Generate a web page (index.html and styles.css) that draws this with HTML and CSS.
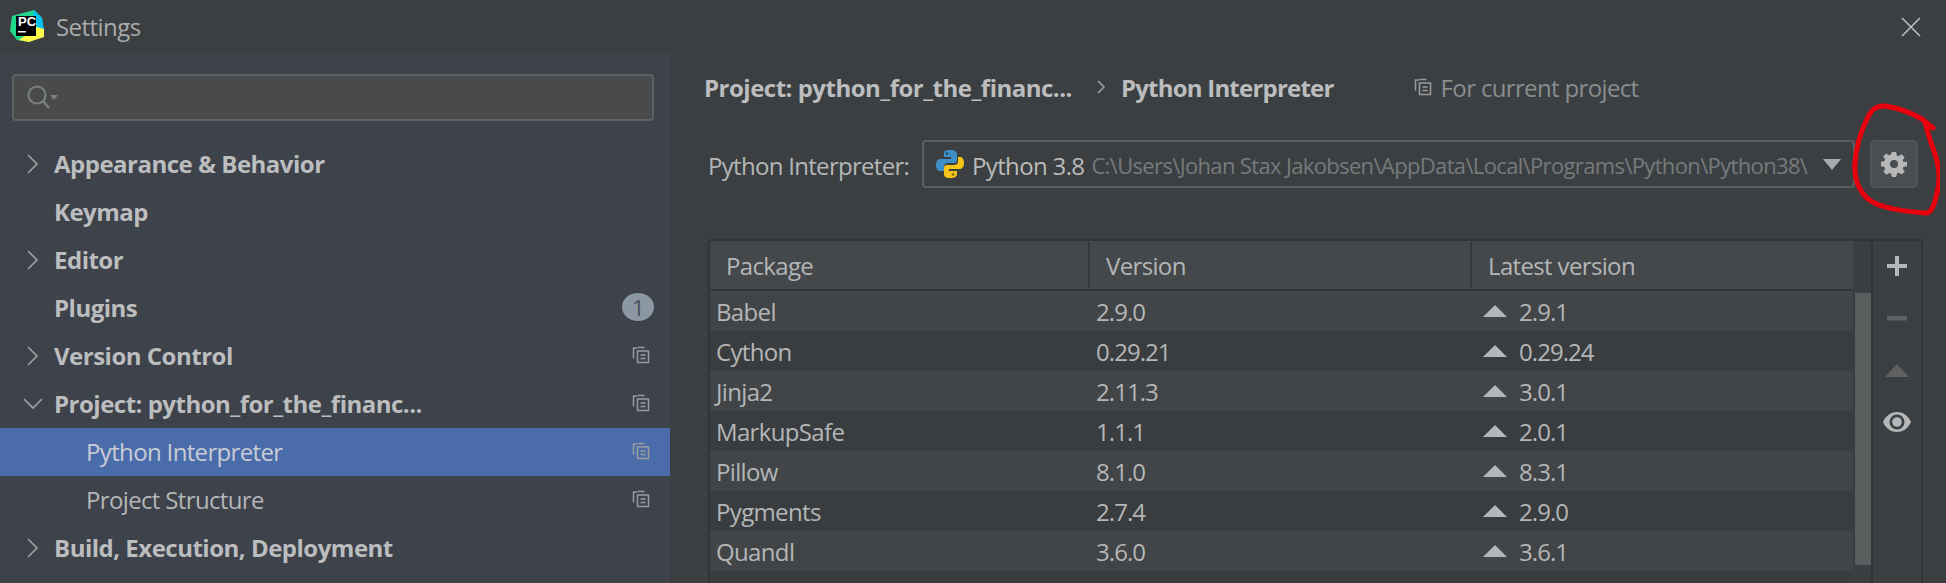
FILE: index.html
```html
<!DOCTYPE html>
<html lang="en">
<head>
  <meta charset="UTF-8" />
  <title>Settings</title>
  <link rel="stylesheet" href="styles.css">
</head>
<body>
  <div class="window">
    <header class="titlebar">
      <svg class="logo" width="36" height="34" viewBox="0 0 36 34">
        <polygon points="25,1 33,9 35,26 20,33 8,31 1,22 3,7 14,4" fill="#21d789"/>
        <polygon points="25,1 33,9 35,20 28,20 24,6" fill="#07c3f2"/>
        <polygon points="35,20 35,28 20,33 10,31 28,18" fill="#fcf84a"/>
        <rect x="7" y="7" width="20" height="20" fill="#000"/>
        <rect x="9" y="22" width="8" height="1.5" fill="#fff"/>
      </svg>
      <span class="logo-text">PC</span>
      <span class="title">Settings</span>
      <svg class="close" width="20" height="20" viewBox="0 0 20 20"><path d="M1 1 L19 19 M19 1 L1 19" stroke="#bbbdbe" stroke-width="1.6" fill="none"/></svg>
    </header>

    <div class="content">
      <aside class="sidebar">
        <div class="search">
          <svg width="36" height="28" viewBox="0 0 36 28">
            <circle cx="11" cy="11" r="8.5" fill="none" stroke="#7d8081" stroke-width="2"/>
            <path d="M17 17 L23 24" stroke="#7d8081" stroke-width="2.4"/>
            <polygon points="24,11 32,11 28,16" fill="#7d8081"/>
          </svg>
        </div>
        <ul class="tree">
          <li class="node bold"><svg class="arrow" viewBox="0 0 14 20"><path d="M2 1 L11 10 L2 19" /></svg>Appearance &amp; Behavior</li>
          <li class="node bold">Keymap</li>
          <li class="node bold"><svg class="arrow" viewBox="0 0 14 20"><path d="M2 1 L11 10 L2 19" /></svg>Editor</li>
          <li class="node bold">Plugins<span class="badge">1</span></li>
          <li class="node bold"><svg class="arrow" viewBox="0 0 14 20"><path d="M2 1 L11 10 L2 19" /></svg>Version Control<svg class="scope" viewBox="0 0 18 18"><use href="#scope-icon"/></svg></li>
          <li class="node bold"><svg class="arrow arrow-down" viewBox="0 0 20 14"><path d="M1 2 L10 11 L19 2" /></svg>Project: python_for_the_financ...<svg class="scope" viewBox="0 0 18 18"><use href="#scope-icon"/></svg></li>
          <li class="node child selected">Python Interpreter<svg class="scope" viewBox="0 0 18 18"><use href="#scope-icon"/></svg></li>
          <li class="node child">Project Structure<svg class="scope" viewBox="0 0 18 18"><use href="#scope-icon"/></svg></li>
          <li class="node bold"><svg class="arrow" viewBox="0 0 14 20"><path d="M2 1 L11 10 L2 19" /></svg>Build, Execution, Deployment</li>
        </ul>
      </aside>

      <main class="panel">
        <div class="crumbs">
          <span class="crumb crumb-project">Project: python_for_the_financ...</span>
          <svg class="crumb-sep" width="10" height="16" viewBox="0 0 10 16"><path d="M2 2 L8 8 L2 14" fill="none" stroke="#a0a2a3" stroke-width="1.5"/></svg>
          <span class="crumb crumb-page">Python Interpreter</span>
          <span class="for-project"><svg class="scope" viewBox="0 0 18 18"><use href="#scope-icon"/></svg>For current project</span>
        </div>

        <div class="interpreter">
          <label class="interp-label">Python Interpreter:</label>
          <div class="combo">
            <svg class="py" width="30" height="30" viewBox="0 0 30 30">
              <path d="M15 1 C9 1 9 3 9 5 V8 H16 V10 H6 C3 10 1 12 1 16 C1 20 3 22 5 22 H9 V18 C9 15 11 14 13 14 H19 C21 14 22 13 22 11 V5 C22 3 20 1 15 1 Z" fill="#3d8fc6"/>
              <path d="M15 29 C21 29 22 27 22 25 V22 H14 V20 H24 C27 20 29 18 29 14 C29 10 27 8 25 8 H23 V12 C23 15 21 16 19 16 H12 C10 16 9 17 9 19 V25 C9 27 10 29 15 29 Z" fill="#f5c518"/>
              <circle cx="12" cy="4.5" r="1.3" fill="#23526f"/>
              <circle cx="18" cy="25.5" r="1.3" fill="#7a6212"/>
            </svg>
            <span class="py-name">Python 3.8</span>
            <span class="py-path">C:\Users\Johan Stax Jakobsen\AppData\Local\Programs\Python\Python38\</span>
            <svg class="combo-arrow" width="18" height="11" viewBox="0 0 18 11"><polygon points="0,0 18,0 9,11" fill="#a9abac"/></svg>
          </div>
          <button class="gear-btn">
            <svg width="26" height="26" viewBox="0 0 24 24"><path fill="#b5b7b8" fill-rule="evenodd" d="M10 1h4l.6 3.1 1.7.7 2.7-1.8 2.8 2.8-1.8 2.7.7 1.7L24 10v4l-3.1.6-.7 1.7 1.8 2.7-2.8 2.8-2.7-1.8-1.7.7L14 24h-4l-.6-3.1-1.7-.7-2.7 1.8-2.8-2.8 1.8-2.7-.7-1.7L0 14v-4l3.100-.6.7-1.700L2 5l2.800-2.800 2.700 1.800 1.700-.7zM12 8.200a3.800 3.800 0 1 0 0 7.600 3.800 3.800 0 0 0 0-7.600z"/></svg>
          </button>
        </div>

        <div class="packages">
          <div class="table">
            <div class="thead">
              <div class="th th-name">Package</div>
              <div class="th th-version">Version</div>
              <div class="th th-latest">Latest version</div>
            </div>
            <div class="tbody">
              <div class="row"><span class="c-name">Babel</span><span class="c-version">2.9.0</span><span class="c-latest"><i class="up"></i>2.9.1</span></div>
              <div class="row"><span class="c-name">Cython</span><span class="c-version">0.29.21</span><span class="c-latest"><i class="up"></i>0.29.24</span></div>
              <div class="row"><span class="c-name">Jinja2</span><span class="c-version">2.11.3</span><span class="c-latest"><i class="up"></i>3.0.1</span></div>
              <div class="row"><span class="c-name">MarkupSafe</span><span class="c-version">1.1.1</span><span class="c-latest"><i class="up"></i>2.0.1</span></div>
              <div class="row"><span class="c-name">Pillow</span><span class="c-version">8.1.0</span><span class="c-latest"><i class="up"></i>8.3.1</span></div>
              <div class="row"><span class="c-name">Pygments</span><span class="c-version">2.7.4</span><span class="c-latest"><i class="up"></i>2.9.0</span></div>
              <div class="row"><span class="c-name">Quandl</span><span class="c-version">3.6.0</span><span class="c-latest"><i class="up"></i>3.6.1</span></div>
            </div>
          </div>
          <div class="scrollbar"><div class="thumb"></div></div>
          <div class="tools">
            <svg width="22" height="22" viewBox="0 0 22 22"><path d="M9 1h4v8h8v4h-8v8H9v-8H1V9h8z" fill="#b4b6b7"/></svg>
            <svg width="22" height="22" viewBox="0 0 22 22"><rect x="1" y="9" width="20" height="4.500" fill="#5f6263"/></svg>
            <svg width="24" height="22" viewBox="0 0 24 22"><polygon points="12,5 24,18 0,18" fill="#5f6162"/></svg>
            <svg width="30" height="22" viewBox="0 0 30 22"><path fill="#b4b6b7" fill-rule="evenodd" d="M15 1C8 1 3 6 1 11c2 5 7 10 14 10s12-5 14-10C27 6 22 1 15 1zm0 2.500a7.500 7.500 0 1 1 0 15 7.500 7.500 0 0 1 0-15z"/><circle cx="15" cy="11" r="4.800" fill="#b4b6b7"/></svg>
          </div>
        </div>
      </main>
    </div>

    <svg class="scribble" width="110" height="125" viewBox="0 0 110 125">
      <path d="M103 27 L92 18 C80 11 68 7 55 5 C46 4 41 9 37 18 C30 32 26 48 25 62 C24 76 27 88 38 98 C50 107 70 110 96 112 C102 112 105 102 107 92 C111 78 109 64 104 50 C100 40 98 32 95 21"/>
    </svg>
  </div>

  <svg width="0" height="0" class="defs">
    <symbol id="scope-icon" viewBox="0 0 18 18">
      <path d="M5.500 1.500 H12.500 M1.500 4 V12.500 M5.500 5 H16.500 V16.500 H5.500 Z M8.500 9 H13.500 M8.500 12.500 H13.500" fill="none" stroke="currentColor" stroke-width="1.500"/>
      <path d="M1.500 4 V2 H5" fill="none" stroke="currentColor" stroke-width="1.500"/>
    </symbol>
  </svg>
</body>
</html>
```

FILE: styles.css
```css
html, body {
  margin: 0;
  padding: 0;
  background-color: #3c3f41;
}
.window {
  position: relative;
  width: 1946px;
  height: 583px;
  overflow: hidden;
  font-family: "Open Sans", "Noto Sans", sans-serif;
  font-size: 24px;
  letter-spacing: -0.65px;
  color: #bbbbbb;
}
.defs {
  position: absolute;
}

/* title bar */
.titlebar {
  position: relative;
  display: flex;
  align-items: center;
  height: 53px;
  padding-left: 9px;
  box-sizing: border-box;
  background-color: #3c3f41;
}
.logo {
  flex: none;
  margin-top: -2px;
}
.logo-text {
  position: absolute;
  left: 18px;
  top: 14px;
  font-family: "Liberation Sans", sans-serif;
  font-size: 13px;
  font-weight: bold;
  letter-spacing: 0;
  line-height: 15px;
  color: #fff;
}
.title {
  margin-left: 11px;
  color: #a8aaab;
  letter-spacing: -0.55px;
}
.close {
  margin-left: auto;
  margin-right: 25px;
}

.content {
  display: flex;
  height: 530px;
}

/* sidebar */
.sidebar {
  flex: none;
  width: 670px;
  background-color: #3e424b;
  box-sizing: border-box;
  padding-top: 21px;
}
.search {
  display: flex;
  align-items: center;
  height: 47px;
  margin: 0 16px 0 12px;
  padding-left: 12px;
  box-sizing: border-box;
  background-color: #484a4b;
  border: 2px solid #5f6263;
  border-radius: 4px;
}
.tree {
  list-style: none;
  margin: 19px 0 0;
  padding: 0;
}
.node {
  position: relative;
  display: flex;
  align-items: center;
  height: 48px;
  box-sizing: border-box;
  padding-left: 54px;
  padding-right: 18px;
  padding-bottom: 2px;
  white-space: nowrap;
}
.bold {
  font-weight: 700;
  letter-spacing: -0.5px;
  color: #bcbdbe;
}
.child {
  padding-left: 86px;
  color: #b4b6b7;
}
.selected {
  background-color: #4a6cab;
  color: #c8ccd4;
}
.arrow {
  position: absolute;
  left: 26px;
  top: 14px;
  width: 14px;
  height: 20px;
  fill: none;
  stroke: #a0a2a4;
  stroke-width: 1.6;
}
.arrow-down {
  left: 23px;
  top: 17px;
  width: 20px;
  height: 14px;
}
.badge {
  margin-left: auto;
  margin-right: -2px;
  width: 32px;
  height: 28px;
  border-radius: 50%;
  background-color: #8b98a4;
  color: #4a5058;
  font-size: 22px;
  font-weight: 400;
  line-height: 28px;
  text-align: center;
}
.scope {
  flex: none;
  width: 18px;
  height: 18px;
  margin-left: auto;
  margin-right: 2px;
  color: #9a9c9e;
}

/* right panel */
.panel {
  flex: 1;
  min-width: 0;
  background-color: #3c3f41;
  padding-left: 34px;
  padding-right: 23px;
}
.crumbs {
  display: flex;
  align-items: center;
  height: 68px;
  font-weight: 700;
  letter-spacing: -0.5px;
  color: #bcbdbe;
}
.crumb-sep {
  margin-left: 24px;
  margin-right: 15px;
}
.crumb-page {
  letter-spacing: -0.78px;
}
.for-project {
  display: flex;
  align-items: center;
  gap: 9px;
  margin-left: 80px;
  font-weight: 400;
  letter-spacing: -0.65px;
  color: #8a8d8e;
}
.for-project .scope {
  margin: 0;
}
.interpreter {
  display: flex;
  align-items: center;
  height: 48px;
  margin-top: 19px;
  padding-left: 4px;
}
.interp-label {
  width: 214px;
  flex: none;
  padding-top: 2px;
  letter-spacing: -0.7px;
  color: #b4b6b7;
}
.combo {
  display: flex;
  align-items: center;
  flex: none;
  width: 933px;
  height: 48px;
  box-sizing: border-box;
  padding: 0 12px 0 11px;
  border: 2px solid #5c5f60;
  border-radius: 4px;
  white-space: nowrap;
}
.py {
  flex: none;
  margin-right: 7px;
}
.py-name {
  color: #bbbbbb;
  margin-right: 7px;
  padding-top: 2px;
}
.py-path {
  color: #767a7c;
  font-size: 22px;
  letter-spacing: -0.65px;
  padding-top: 2px;
}
.combo-arrow {
  margin-left: auto;
  flex: none;
}
.gear-btn {
  display: flex;
  align-items: center;
  justify-content: center;
  flex: none;
  width: 48px;
  height: 48px;
  margin-left: 15px;
  padding: 0;
  background-color: #4b4e50;
  border: 1px solid #56595b;
  border-radius: 5px;
}

/* package table */
.packages {
  display: flex;
  height: 344px;
  margin-top: 51px;
  margin-left: 4px;
  border: 2px solid #323537;
  border-bottom: none;
  box-sizing: border-box;
}
.table {
  flex: none;
  width: 1143px;
}
.thead {
  display: flex;
  height: 48px;
  background-color: #45484a;
  border-bottom: 2px solid #323537;
}
.th {
  display: flex;
  align-items: center;
  box-sizing: border-box;
  height: 46px;
  margin-top: 1px;
  padding-left: 16px;
  border-right: 2px solid #363839;
  color: #b4b6b7;
}
.th-name {
  width: 380px;
}
.th-version {
  width: 382px;
}
.th-latest {
  flex: 1;
  border-right: none;
}
.row {
  display: flex;
  align-items: center;
  height: 40px;
  color: #b4b6b7;
}
.row:nth-child(odd) {
  background-color: #424547;
}
.row:nth-child(even) {
  background-color: #3a3d3f;
}
.tbody::after {
  content: "";
  display: block;
  height: 40px;
  background-color: #3a3d3f;
}
.c-name {
  width: 380px;
  padding-left: 6px;
  box-sizing: border-box;
}
.c-version {
  width: 387px;
  padding-left: 6px;
  box-sizing: border-box;
  letter-spacing: -0.95px;
}
.c-latest {
  display: flex;
  align-items: center;
  letter-spacing: -0.95px;
}
.up {
  width: 0;
  height: 0;
  margin-left: 6px;
  margin-right: 12px;
  border-left: 12px solid transparent;
  border-right: 12px solid transparent;
  border-bottom: 12px solid #b4b6b7;
}
.scrollbar {
  flex: none;
  width: 20px;
  box-sizing: border-box;
  padding: 52px 2px 0;
  border-right: 2px solid #323537;
  background-color: #3b3e40;
}
.thumb {
  width: 16px;
  height: 272px;
  background-color: #5a5d5e;
}
.tools {
  flex: 1;
  display: flex;
  flex-direction: column;
  align-items: center;
  gap: 30px;
  padding-top: 14px;
}

.scribble {
  position: absolute;
  left: 1830px;
  top: 101px;
  fill: none;
  stroke: #e8000d;
  stroke-width: 5;
  stroke-linecap: round;
  stroke-linejoin: round;
}
```
